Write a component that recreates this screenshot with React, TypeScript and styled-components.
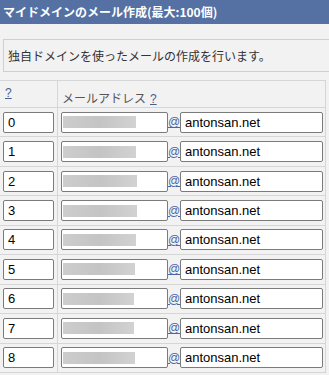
import React from 'react';
import styled, { createGlobalStyle } from 'styled-components';

const GlobalStyle = createGlobalStyle`
  html, body {
    margin: 0;
    padding: 0;
    background: #f2f2f2;
  }
  body {
    width: 329px;
    height: 375px;
    overflow: hidden;
    font-family: 'Liberation Sans', 'Noto Sans CJK JP', sans-serif;
  }
`;

const TitleBar = styled.div`
  background: #5571a3;
  color: #ffffff;
  height: 24px;
  line-height: 24px;
  padding-left: 3px;
  font-family: 'Noto Sans CJK JP', sans-serif;
  font-size: 12px;
  font-weight: 700;
  white-space: nowrap;
`;

const Main = styled.div`
  background: #f2f2f2;
  padding-top: 15px;
  overflow: hidden;
`;

const Notice = styled.div`
  margin-left: 3px;
  margin-right: -20px;
  height: 31px;
  line-height: 31px;
  border: 1px solid #cfcfcf;
  border-right: none;
  padding-left: 4px;
  color: #333;
  font-family: 'Noto Sans CJK JP', sans-serif;
  font-size: 12px;
  white-space: nowrap;
`;

const Table = styled.div`
  margin-top: 8px;
  width: 326px;
  border-top: 1px solid #d6d6d6;
  border-right: 1px solid #d6d6d6;
  box-sizing: border-box;
`;

const Row = styled.div<{ $head?: boolean }>`
  display: grid;
  grid-template-columns: 57px 1fr;
  height: ${(p) => (p.$head ? '26px' : '28.44px')};
  border-bottom: 1px solid #d6d6d6;
`;

const Cell = styled.div<{ $first?: boolean }>`
  display: flex;
  align-items: center;
  padding-left: 3px;
  border-left: ${(p) => (p.$first ? 'none' : '1px solid #d6d6d6')};
`;

const HeadCell = styled(Cell)`
  align-items: flex-start;
  padding-top: 4px;
  color: #555;
  font-family: 'Noto Sans CJK JP', sans-serif;
  font-size: 12px;
  line-height: 16px;
  white-space: nowrap;
`;

const HeadLabel = styled.span`
  margin-left: 1px;
  margin-top: 5px;
`;

const Help = styled.a<{ $gap?: number }>`
  color: #4a5e8e;
  text-decoration: underline;
  font-family: 'Liberation Sans', sans-serif;
  font-size: 12px;
  margin-left: ${(p) => p.$gap ?? 2}px;
`;

const Field = styled.div<{ $w: number }>`
  width: ${(p) => p.$w}px;
  height: 21px;
  box-sizing: border-box;
  border: 1px solid #7b7b7b;
  border-radius: 2px;
  background: #ffffff;
  padding-left: 4px;
  display: flex;
  align-items: center;
  color: #000;
  font-family: 'Liberation Sans', sans-serif;
  font-size: 13px;
`;

const Blurred = styled.span<{ $w: number }>`
  display: block;
  width: ${(p) => p.$w}px;
  height: 12px;
  margin-left: -3px;
  background: linear-gradient(90deg, #cdcdcd, #c4c4c4 50%, #d2d2d2);
  filter: blur(0.6px);
`;

const At = styled.a`
  width: 12px;
  color: #4a66a8;
  text-decoration: underline;
  font-family: 'Liberation Sans', sans-serif;
  font-size: 12px;
  text-align: center;
`;

const rows = [0, 1, 2, 3, 4, 5, 6, 7, 8];
const blurW = [73, 73, 74, 74, 73, 72, 71, 71, 72];

const App = () => {
  return (
    <>
      <GlobalStyle />
      <TitleBar>マイドメインのメール作成(最大:100個)</TitleBar>
      <Main>
        <Notice>独自ドメインを使ったメールの作成を行います。</Notice>
        <Table>
          <Row $head>
            <HeadCell $first>
              <Help>?</Help>
            </HeadCell>
            <HeadCell>
              <HeadLabel>
                メールアドレス
                <Help $gap={4}>?</Help>
              </HeadLabel>
            </HeadCell>
          </Row>
          {rows.map((n, i) => (
            <Row key={n}>
              <Cell $first>
                <Field $w={51}>{n}</Field>
              </Cell>
              <Cell>
                <Field $w={107}>
                  <Blurred $w={blurW[i]} />
                </Field>
                <At>@</At>
                <Field $w={143}>antonsan.net</Field>
              </Cell>
            </Row>
          ))}
        </Table>
      </Main>
    </>
  );
};

export default App;
